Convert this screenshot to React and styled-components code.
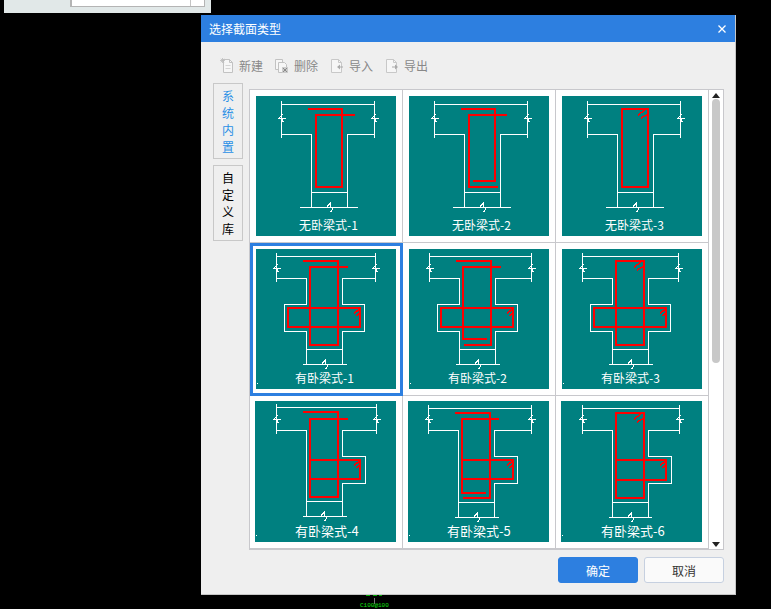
import React from "react";
import styled, { createGlobalStyle } from "styled-components";

const CJK = `"Noto Sans CJK SC", "Liberation Sans", sans-serif`;

const Global = createGlobalStyle`
  html, body { margin: 0; padding: 0; background: #000; overflow: hidden; }
  * { box-sizing: border-box; }
`;

const Page = styled.div`
  position: relative;
  width: 771px;
  height: 609px;
  background: #000;
  overflow: hidden;
  font-family: ${CJK};
`;

const BackPanel = styled.div`
  position: absolute;
  left: 4px;
  top: 0;
  width: 207px;
  height: 13px;
  background: #e1e8e8;
  display: flex;
  align-items: flex-start;
  overflow: hidden;
`;

const BackLabel = styled.span`
  width: 10px;
  margin: -11px 0 0 34px;
  font-size: 10px;
  line-height: 12px;
  color: #444;
`;

const BackField = styled.div`
  width: 135px;
  height: 7px;
  margin-left: 22px;
  display: flex;
  justify-content: flex-end;
  background: #fff;
  border: solid #b4b4b4;
  border-width: 0 1px 1px 2px;
`;

const BackFieldEnd = styled.div`
  width: 14px;
  border-left: 1px solid #c4c4c4;
`;

const CanvasNote = styled.div`
  position: absolute;
  left: 360px;
  top: 595px;
  width: 30px;
  height: 14px;
`;

const CanvasMarks = styled.svg`
  display: block;
`;

const CanvasText = styled.span`
  position: absolute;
  left: 0;
  top: 7px;
  font-family: "Liberation Mono", monospace;
  font-size: 6px;
  line-height: 8px;
  color: #10e010;
  white-space: nowrap;
`;

const Dialog = styled.section`
  position: absolute;
  left: 201px;
  top: 15px;
  width: 535px;
  height: 580px;
  display: flex;
  flex-direction: column;
  background: #efefef;
  border-right: 1px solid #c6c6c6;
  border-bottom: 1px solid #c6c6c6;
`;

const TitleBar = styled.header`
  height: 27px;
  flex: none;
  display: flex;
  align-items: center;
  justify-content: space-between;
  padding: 0 9px 0 8px;
  background: #2d7fe0;
  color: #fff;
  font-size: 12px;
`;

const CloseIcon = styled.svg`
  display: block;
`;

const Toolbar = styled.div`
  height: 41px;
  flex: none;
  display: flex;
  align-items: center;
  gap: 12px;
  padding: 7px 0 0 19px;
`;

const ToolItem = styled.div`
  display: flex;
  align-items: center;
  gap: 5px;
  color: #888;
  font-size: 12px;
  line-height: 16px;
`;

const Content = styled.div`
  display: flex;
  align-items: flex-start;
  gap: 6px;
  padding-left: 12px;
`;

const Tabs = styled.nav`
  width: 30px;
  display: flex;
  flex-direction: column;
  gap: 6px;
`;

const Tab = styled.div`
  width: 30px;
  height: 76px;
  display: flex;
  align-items: center;
  justify-content: center;
  border: 1px solid #c8c8c8;
  color: ${(p) => (p.$active ? "#2a8fe6" : "#000")};
  font-size: 12px;
`;

const TabText = styled.span`
  width: 12px;
  line-height: 17px;
  word-break: break-all;
`;

const Panel = styled.div`
  width: 475px;
  height: 461px;
  margin-top: 6px;
  display: flex;
  background: #fff;
  border: 1px solid #c8c8cc;
  overflow: hidden;
`;

const Grid = styled.div`
  width: 459px;
  flex: none;
  display: grid;
  grid-template-columns: repeat(3, 153px);
  grid-auto-rows: 153px;
`;

const Cell = styled.div`
  padding: ${(p) => (p.$selected ? "3px" : `${p.$inset}px`)};
  border: solid ${(p) => (p.$selected ? "#2d7fe0" : "#c8c8cc")};
  border-width: ${(p) => (p.$selected ? "3px" : "0 1px 1px 0")};
`;

const Tile = styled.figure`
  position: relative;
  width: ${(p) => p.$size}px;
  height: ${(p) => p.$size}px;
  margin: 0;
  display: flex;
  align-items: flex-end;
  background: #008080;
`;

const TileDrawing = styled.svg`
  position: absolute;
  inset: 0;
`;

const TileLabel = styled.figcaption`
  position: relative;
  width: 100%;
  padding: 0 0 3px ${(p) => p.$left}px;
  color: #fff;
  font-size: ${(p) => p.$font}px;
  line-height: 16px;
  white-space: nowrap;
`;

const Scrollbar = styled.div`
  flex: 1;
  display: flex;
  flex-direction: column;
  align-items: center;
  padding: 3px 0 2px;
`;

const ArrowUp = styled.i`
  width: 0;
  height: 0;
  border: solid transparent;
  border-width: 0 4px 5px;
  border-bottom-color: #222;
`;

const ArrowDown = styled.i`
  width: 0;
  height: 0;
  margin-top: auto;
  border: solid transparent;
  border-width: 5px 4px 0;
  border-top-color: #222;
`;

const Thumb = styled.div`
  width: 8px;
  height: 264px;
  margin-top: 1px;
  border-radius: 4px;
  background: #c8c8c8;
`;

const Footer = styled.footer`
  display: flex;
  justify-content: flex-end;
  gap: 6px;
  padding: 7px 11px 0 0;
`;

const Button = styled.button`
  width: 80px;
  height: 26px;
  padding: 0;
  font-family: ${CJK};
  font-size: 12px;
  border-radius: 3px;
  border: 1px solid ${(p) => (p.$primary ? "#2d7fe0" : "#c6d0e0")};
  background: ${(p) => (p.$primary ? "#2d7fe0" : "#fafafa")};
  color: ${(p) => (p.$primary ? "#fff" : "#333")};
`;

/* ---- section drawings ---- */

function framePath(f) {
  const d = [
    `M${f.l} ${f.vt}V${f.vb}`,
    `M${f.r} ${f.vt}V${f.vb}`,
    `M${f.l} ${f.top}H${f.r}`,
    f.earL
      ? `M${f.l} ${f.fl}H${f.wl}V${f.earT}H${f.earL}V${f.earB}H${f.wl}V${f.base}`
      : `M${f.l} ${f.fl}H${f.wl}V${f.base}`,
    f.earR
      ? `M${f.r} ${f.fl}H${f.wr}V${f.earT}H${f.earR}V${f.earB}H${f.wr}V${f.base}`
      : `M${f.r} ${f.fl}H${f.wr}V${f.base}`,
    `M${f.wl} ${f.cross}H${f.wr}`,
    `M${f.bl} ${f.base}H${f.br}`,
    `M${f.brk + 1} ${f.base - 5}L${f.brk - 3} ${f.base}M${f.brk + 1} ${f.base - 5}V${f.base}`,
    `M${f.brk + 4} ${f.base}L${f.brk + 1} ${f.base + 5}`,
  ];
  [f.l, f.r].forEach((x) => {
    d.push(`M${x - 4} ${f.side}H${x + 4}M${x - 3} ${f.side}L${x + 1} ${f.side - 4}M${x} ${f.side}L${x + 2} ${f.side + 4}`);
  });
  return d.join("");
}

const T = { top: 8, fl: 38, vt: 4, vb: 41, side: 22, cross: 96, base: 111, bl: 43, br: 101, brk: 73, l: 25, r: 118, wl: 55, wr: 91 };
const R2 = { top: 7, fl: 29, vt: 3, vb: 32, side: 19, cross: 100, base: 115, bl: 46, br: 90, brk: 68, l: 20, wl: 50, wr: 86, earT: 55, earB: 82, earR: 108 };
const R3 = { top: 7, fl: 29, vt: 3, vb: 32, side: 18, cross: 101, base: 116, earT: 55, earB: 82 };

/* hook ticks measured from the stirrup corner they sit in */
const topHook = (x, y) => `M${x - 10} ${y + 6}L${x - 3} ${y + 1}M${x - 7} ${y + 9}L${x} ${y + 5}`;
const sideHook = (x, y) => `M${x - 6} ${y + 5}L${x} ${y + 1}M${x - 3} ${y + 8}L${x} ${y + 4}`;

const tiles = [
  {
    name: "无卧梁式-1", size: 140, left: 43, font: 12, frame: { ...T },
    red: "M52 13H86V91H60V19H99",
  },
  {
    name: "无卧梁式-2", size: 140, left: 43, font: 12, frame: { ...T },
    red: "M52 13H86V85H64M98 19H60V91H89",
  },
  {
    name: "无卧梁式-3", size: 140, left: 43, font: 12, frame: { ...T },
    red: "M60 13H86V91H60Z", hooks: topHook(86, 13),
  },
  {
    name: "有卧梁式-1", size: 140, left: 39, font: 12, selected: true, dot: true,
    frame: { ...R2, r: 119, earL: 28 },
    red: "M47 12H82V96H54V18H92M32 59H104V78H32Z", hooks: sideHook(104, 59),
  },
  {
    name: "有卧梁式-2", size: 140, left: 39, font: 12, dot: true,
    frame: { ...R2, r: 122, earL: 28 },
    red: "M47 12H82V96H55M92 18H54V90H78M32 59H104V78H32Z", hooks: sideHook(104, 59),
  },
  {
    name: "有卧梁式-3", size: 140, left: 39, font: 12, dot: true,
    frame: { ...R2, r: 116, earL: 28 },
    red: "M54 12H82V96H54ZM32 59H104V78H32Z", hooks: topHook(82, 12) + sideHook(104, 59),
  },
  {
    name: "有卧梁式-4", size: 141, left: 40, font: 13, dot: true,
    frame: { ...R3, side: 18, top: 6, vt: 2, l: 21, r: 121, wl: 51, wr: 87, earR: 110, cross: 100, base: 115, bl: 47, br: 91, brk: 68 },
    red: "M48 11H83V96H55V18H93M55 59H105V78H55", hooks: sideHook(105, 59),
  },
  {
    name: "有卧梁式-5", size: 141, left: 39, font: 13, dot: true,
    frame: { ...R3, l: 20, r: 123, wl: 50, wr: 86, earR: 109, bl: 46, br: 90, brk: 68 },
    red: "M47 12H82V97H55M91 18H54V92H78M54 59H105V78H54", hooks: sideHook(105, 59),
  },
  {
    name: "有卧梁式-6", size: 141, left: 40, font: 13, dot: true,
    frame: { ...R3, l: 21, r: 118, wl: 51, wr: 87, earR: 110, bl: 47, br: 90, brk: 69 },
    red: "M55 12H83V97H55ZM55 59H105V79H55", hooks: topHook(83, 12) + sideHook(105, 59),
  },
];

function SectionTile({ tile }) {
  const { size, frame, red, hooks, name, left, font, dot } = tile;
  return (
    <Tile $size={size}>
      <TileDrawing width={size} height={size} viewBox={`0 0 ${size} ${size}`} shapeRendering="crispEdges" fill="none">
        <path d={framePath(frame)} transform="translate(.5 .5)" stroke="#fff" strokeWidth="1" />
        <path d={red} stroke="#f00" strokeWidth="2" strokeLinejoin="round" />
        {hooks && <path d={hooks} stroke="#f00" strokeWidth="1.5" />}
        {dot && <rect x="1" y="134" width="1" height="1" fill="#fff" />}
      </TileDrawing>
      <TileLabel $left={left} $font={font}>{name}</TileLabel>
    </Tile>
  );
}

/* ---- toolbar icons ---- */

const Doc = () => (
  <>
    <path d="M3.5 1.5H9.5L12.5 4.5V14.5H3.5Z" fill="#f6f6f6" stroke="#c2c2c2" />
    <path d="M9.5 1.5V4.5H12.5" fill="none" stroke="#c2c2c2" />
  </>
);

const IconNew = () => (
  <svg width="14" height="16" viewBox="0 0 14 16">
    <Doc />
    <path d="M5.5 7.5H10.5M5.5 10.5H10.5" stroke="#d4d4d4" />
    <path d="M2.5 0V5M0 2.5H5M.8 .8L4.2 4.2M4.2 .8L.8 4.2" stroke="#bbb" strokeWidth=".8" />
  </svg>
);

const IconDelete = () => (
  <svg width="14" height="16" viewBox="0 0 14 16">
    <path d="M.5 1.5H7.5V11.5H.5Z" fill="#f6f6f6" stroke="#c2c2c2" />
    <path d="M3.5 4.5H9.5L11.5 6.5V14.5H3.5Z" fill="#f6f6f6" stroke="#c2c2c2" />
    <rect x="7" y="9" width="6" height="6" fill="#ccc" />
    <path d="M8 10L12 14M12 10L8 14" stroke="#8a8a8a" />
  </svg>
);

const IconImport = () => (
  <svg width="14" height="16" viewBox="0 0 14 16">
    <path d="M1.5 1.5H8.5L11.5 4.5V14.5H1.5Z" fill="#f6f6f6" stroke="#c8c8c8" />
    <path d="M8.5 1.5V4.5H11.5" fill="none" stroke="#c8c8c8" />
    <path d="M13 8.5H10V6.5L7 9L10 11.5V9.5H13Z" fill="#aaa" />
  </svg>
);

const IconExport = () => (
  <svg width="14" height="16" viewBox="0 0 14 16">
    <path d="M1.5 1.5H8.5L11.5 4.5V14.5H1.5Z" fill="#f6f6f6" stroke="#c8c8c8" />
    <path d="M8.5 1.5V4.5H11.5" fill="none" stroke="#c8c8c8" />
    <path d="M7 8.5H10V6.5L13 9L10 11.5V9.5H7Z" fill="#aaa" />
  </svg>
);

const tools = [
  { label: "新建", Icon: IconNew },
  { label: "删除", Icon: IconDelete },
  { label: "导入", Icon: IconImport },
  { label: "导出", Icon: IconExport },
];

export default function App() {
  return (
    <Page>
      <Global />
      <BackPanel>
        <BackLabel>框</BackLabel>
        <BackField>
          <BackFieldEnd />
        </BackField>
      </BackPanel>

      <Dialog>
        <TitleBar>
          选择截面类型
          <CloseIcon width="8" height="8" viewBox="0 0 8 8">
            <path d="M.5 .5L7.5 7.5M7.5 .5L.5 7.5" stroke="#fff" strokeWidth="1.3" />
          </CloseIcon>
        </TitleBar>

        <Toolbar>
          {tools.map(({ label, Icon }) => (
            <ToolItem key={label}>
              <Icon />
              {label}
            </ToolItem>
          ))}
        </Toolbar>

        <Content>
          <Tabs>
            <Tab $active><TabText>系统内置</TabText></Tab>
            <Tab><TabText>自定义库</TabText></Tab>
          </Tabs>
          <Panel>
            <Grid>
              {tiles.map((tile) => (
                <Cell key={tile.name} $selected={tile.selected} $inset={tile.size === 141 ? 5 : 6}>
                  <SectionTile tile={tile} />
                </Cell>
              ))}
            </Grid>
            <Scrollbar>
              <ArrowUp />
              <Thumb />
              <ArrowDown />
            </Scrollbar>
          </Panel>
        </Content>

        <Footer>
          <Button $primary>确定</Button>
          <Button>取消</Button>
        </Footer>
      </Dialog>

      <CanvasNote>
        <CanvasMarks width="30" height="14" viewBox="0 0 30 14">
          <path d="M6 .5H10M13 .5H17M19 .5H22" stroke="#0a0" />
          <path d="M14.5 3V9" stroke="#777" />
        </CanvasMarks>
        <CanvasText>C100@100</CanvasText>
      </CanvasNote>
    </Page>
  );
}
